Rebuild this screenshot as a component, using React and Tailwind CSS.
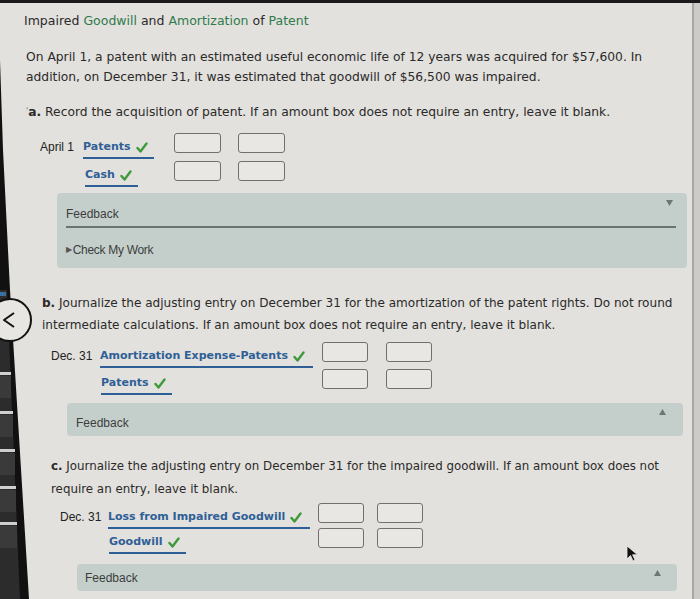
import React from "react";

const V = { fontFamily: '"DejaVu Sans", Verdana, sans-serif' };
const A = { fontFamily: '"Liberation Sans", Arial, sans-serif' };

function Check() {
  return (
    <svg width="12" height="11" viewBox="0 0 12 11" className="inline-block ml-[5px] -mb-[1px]">
      <path d="M1.5 6 L4.5 9.5 L10.5 1.5" fill="none" stroke="#3f9a3c" strokeWidth="2.4" strokeLinecap="round" strokeLinejoin="round" />
    </svg>
  );
}

function Box({ w = 47 }) {
  return <div className="h-[20px] rounded-[3px] border-[1.5px] border-[#707070] bg-[#e8e7e3]" style={{ width: w }} />;
}

function Label({ text, pr = 6 }) {
  return (
    <div className="inline-block border-b-2 border-[#2e5f97] pt-[1px] pb-[3px] text-[11px] leading-[14px] font-bold text-[#2e5f97]" style={{ ...V, paddingRight: pr }}>
      {text}
      <Check />
    </div>
  );
}

function Row({ date, dateW, labelW, text, gap, boxW, showDate, pr, labelMl = 0 }) {
  return (
    <div className="flex items-start h-[20px]">
      <div className="pt-[7px] text-[12px] leading-[14px] text-[#222]" style={{ ...A, width: dateW }}>
        {showDate ? date : ""}
      </div>
      <div style={{ width: labelW, paddingLeft: labelMl }}>
        <Label text={text} pr={pr} />
      </div>
      <div className="flex" style={{ gap }}>
        <Box w={boxW} />
        <Box w={boxW} />
      </div>
    </div>
  );
}

function Tri({ up }) {
  return (
    <svg width="7" height="6" viewBox="0 0 7 6">
      {up ? <path d="M0 6 L3.5 0 L7 6 Z" fill="#6c7673" /> : <path d="M0 0 L7 0 L3.5 6 Z" fill="#6c7673" />}
    </svg>
  );
}

export default function App() {
  return (
    <div className="relative w-[700px] h-[599px] overflow-hidden bg-[#e3e1dd] text-[#2a2a2a]" style={V}>
      <div className="h-[3px] bg-[#1a1a1a]" />
      <div className="flex h-[596px]">
        <div className="w-[692px] flex flex-col">
          {/* Title */}
          <div className="mt-[10px] ml-[24px] text-[12.5px] leading-[16px] text-[#2a2a2a]">
            Impaired <span className="text-[#2f7a4c]">Goodwill</span> and{" "}
            <span className="text-[#2f7a4c]">Amortization</span> of{" "}
            <span className="text-[#2f7a4c]">Patent</span>
          </div>
          <p className="mt-[18px] ml-[26px] whitespace-nowrap text-[12.3px] leading-[20px]">
            On April 1, a patent with an estimated useful economic life of 12 years was acquired for $57,600. In
            <br />
            addition, on December 31, it was estimated that goodwill of $56,500 was impaired.
          </p>
          <p className="mt-[15px] ml-[26px] whitespace-nowrap text-[12.3px] leading-[20px]">
            <span className="text-[8px] text-[#777] align-top">&#39;</span>
            <b>a.</b> Record the acquisition of patent. If an amount box does not require an entry, leave it blank.
          </p>

          <div className="mt-[11px] ml-[40px] flex flex-col gap-[8px]">
            <Row date="April 1" showDate dateW={43} labelW={91} text="Patents" gap={17} boxW={47} pr={6} />
            <Row date="" dateW={43} labelW={91} text="Cash" gap={17} boxW={47} pr={6} labelMl={2} />
          </div>

          {/* Feedback 1 */}
          <div className="mt-[12px] ml-[57px] w-[630px] h-[75px] rounded-[4px] bg-[#c4cfcb] relative px-[9px]" style={A}>
            <div className="flex justify-between items-start pt-[7px]">
              <div className="pt-[7px] text-[12px] leading-[14px] text-[#3d3d3d]">Feedback</div>
              <div className="mr-[5px]"><Tri /></div>
            </div>
            <div className="mt-[5px] mr-[2px] h-[1.5px] bg-[#6a7471]" />
            <div className="mt-[15px] flex items-center text-[12px] leading-[14px] text-[#3d3d3d] tracking-[-0.3px]">
              <span className="text-[8px] text-[#555] mr-[1px]">&#9654;</span>Check My Work
            </div>
          </div>

          {/* Section b */}
          <p className="mt-[24px] ml-[42px] whitespace-nowrap text-[12.05px] leading-[22px]">
            <b>b.</b> Journalize the adjusting entry on December 31 for the amortization of the patent rights. Do not round
            <br />
            intermediate calculations. If an amount box does not require an entry, leave it blank.
          </p>
          <div className="mt-[6px] ml-[51px] flex flex-col gap-[7px]">
            <Row date="Dec. 31" showDate dateW={49} labelW={222} text="Amortization Expense-Patents" gap={18} boxW={46} pr={8} />
            <Row date="" dateW={49} labelW={222} text="Patents" gap={18} boxW={46} pr={6} labelMl={1} />
          </div>

          {/* Feedback 2 */}
          <div className="mt-[14px] ml-[67px] w-[616px] h-[33px] rounded-[4px] bg-[#c4cfcb] flex justify-between items-start px-[9px]" style={A}>
            <div className="pt-[13px] text-[12px] leading-[14px] text-[#3d3d3d]">Feedback</div>
            <div className="pt-[6px] mr-[8px]"><Tri up /></div>
          </div>

          {/* Section c */}
          <p className="mt-[19px] ml-[51px] whitespace-nowrap text-[11.85px] leading-[23px]">
            <b>c.</b> Journalize the adjusting entry on December 31 for the impaired goodwill. If an amount box does not
            <br />
            require an entry, leave it blank.
          </p>
          <div className="mt-[2px] ml-[60px] flex flex-col gap-[5px]">
            <Row date="Dec. 31" showDate dateW={48} labelW={210} text="Loss from Impaired Goodwill" gap={13} boxW={46} pr={8} />
            <Row date="" dateW={48} labelW={210} text="Goodwill" gap={13} boxW={46} pr={6} labelMl={1} />
          </div>

          {/* Feedback 3 */}
          <div className="mt-[16px] ml-[77px] w-[600px] h-[27px] rounded-[4px] bg-[#c4cfcb] flex justify-between items-start px-[8px]" style={A}>
            <div className="pt-[7px] text-[12px] leading-[14px] text-[#3d3d3d]">Feedback</div>
            <div className="pt-[6px] mr-[8px]"><Tri up /></div>
          </div>
        </div>
        <div className="flex-1 border-l-2 border-[#a9a7a3] bg-[#cdcbc7]" />
      </div>

      {/* Photo bezel on left */}
      <svg className="absolute left-0 top-0 pointer-events-none" width="40" height="599" viewBox="0 0 40 599">
        <path d="M0 60 L3 150 L10 290 L29 599 L0 599 Z" fill="#111" />
        <path d="M0 290 L7 290 L20 599 L0 599 Z" fill="#2c2c2c" />
        <rect x="0" y="292" width="6" height="4" fill="#3b6fa0" />
        <rect x="0" y="372" width="11" height="3" fill="#cfcfcf" />
        <rect x="0" y="411" width="13" height="3" fill="#cfcfcf" />
        <rect x="0" y="449" width="15" height="3" fill="#cfcfcf" />
        <rect x="0" y="486" width="16" height="3" fill="#cfcfcf" />
        <rect x="0" y="522" width="17" height="3" fill="#cfcfcf" />
        <rect x="0" y="376" width="11" height="22" fill="#3a3a3a" />
        <rect x="0" y="415" width="13" height="22" fill="#3a3a3a" />
        <rect x="0" y="453" width="15" height="22" fill="#3a3a3a" />
        <rect x="0" y="490" width="16" height="22" fill="#3a3a3a" />
        <rect x="0" y="526" width="17" height="22" fill="#3a3a3a" />
      </svg>

      {/* Back circle button */}
      <div className="absolute left-[-12px] top-[298px] w-[44px] h-[44px] rounded-full border-2 border-[#111] bg-[#e7e6e2] flex items-center justify-end pr-[14px]">
        <svg width="14" height="18" viewBox="0 0 14 18">
          <path d="M12 2 L2 9 L12 16" fill="none" stroke="#111" strokeWidth="2" strokeLinejoin="round" />
        </svg>
      </div>

      {/* Cursor */}
      <svg className="absolute left-[626px] top-[545px]" width="14" height="18" viewBox="0 0 14 18">
        <path d="M1 1 L1 14 L4.5 10.5 L7 16 L9 15 L6.6 9.8 L11.5 9.8 Z" fill="#111" stroke="#eee" strokeWidth="0.8" />
      </svg>
    </div>
  );
}
